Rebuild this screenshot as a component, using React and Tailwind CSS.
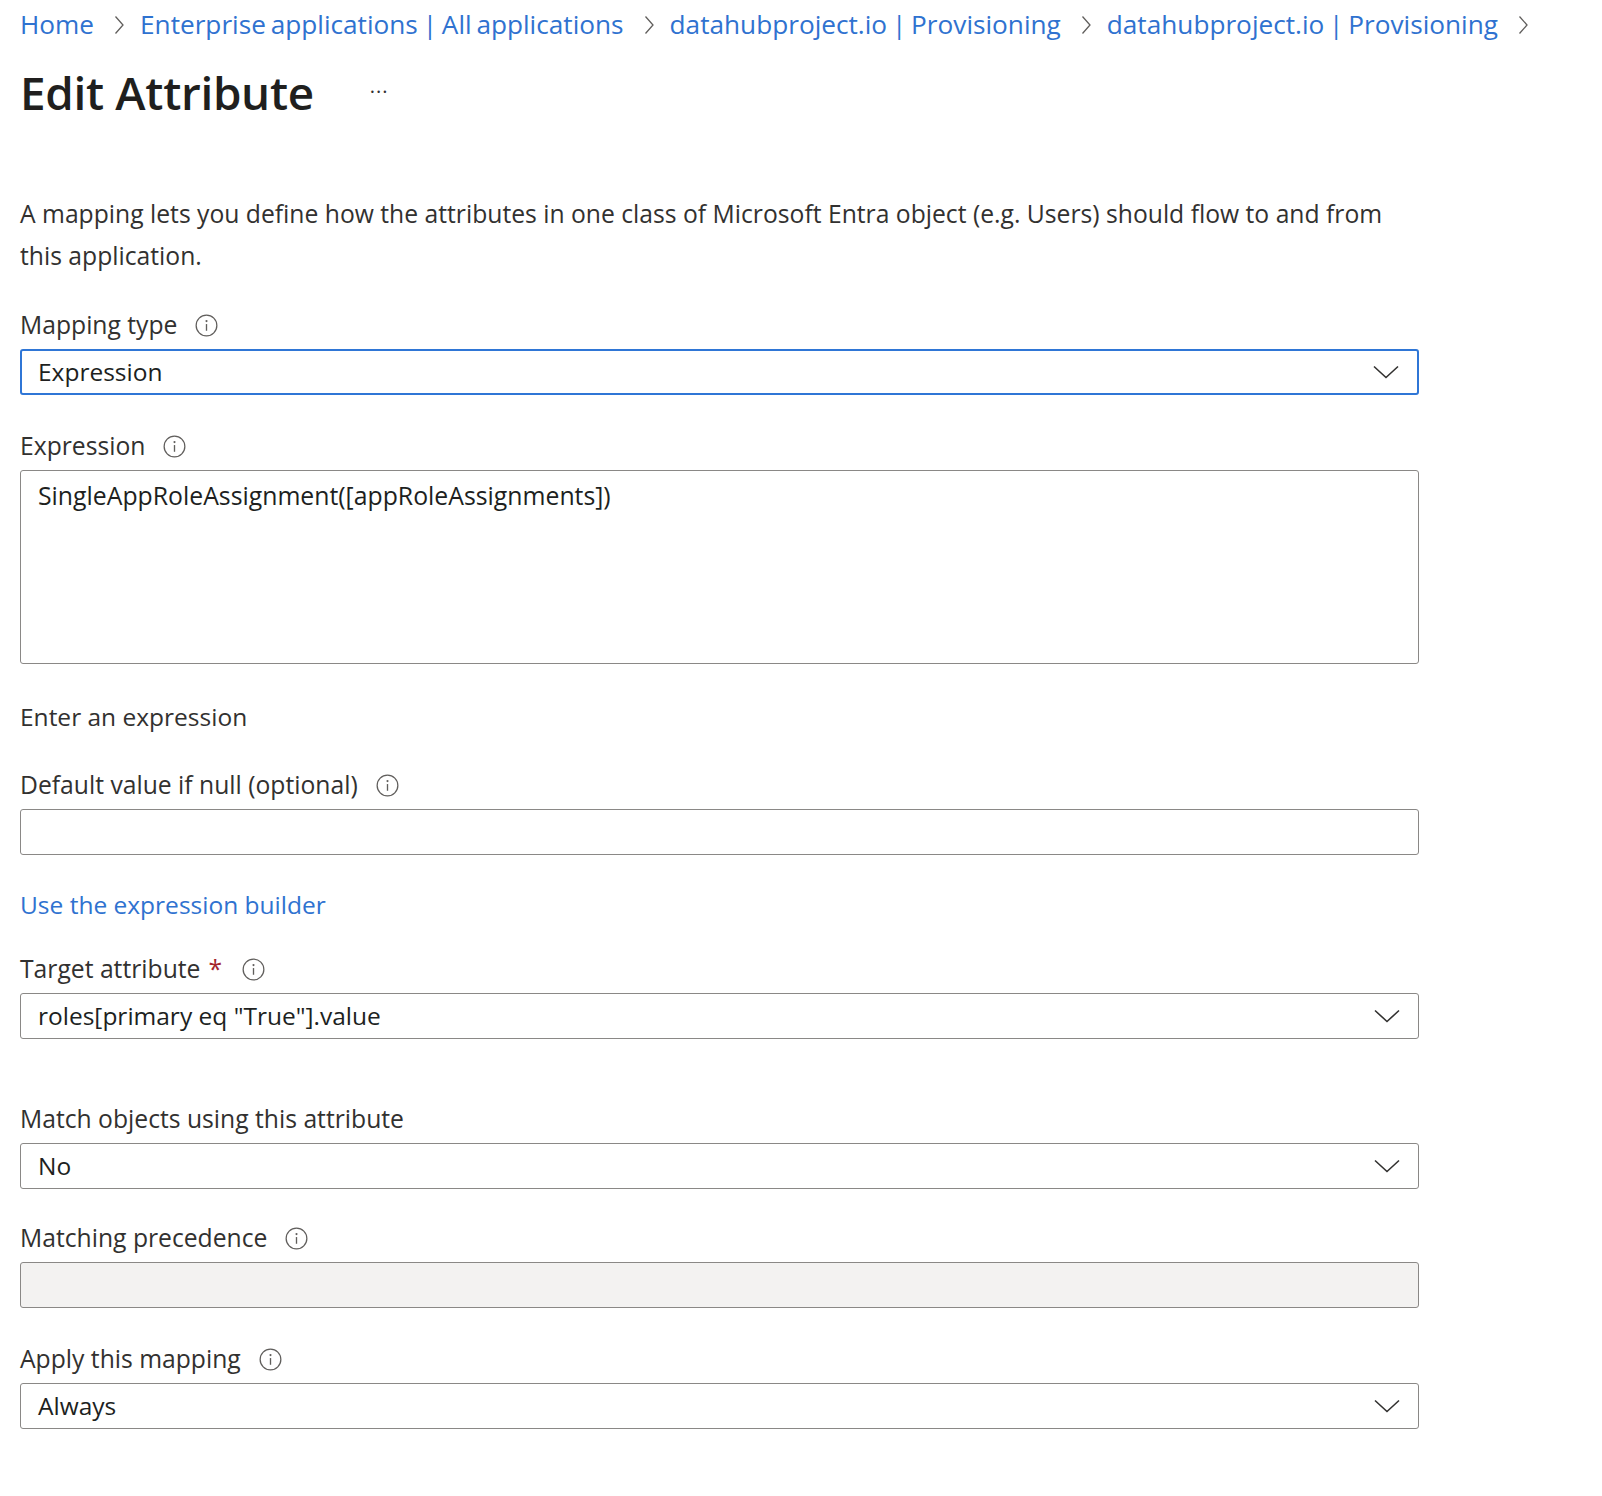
import React from 'react';

const FONT = { fontFamily: '"Open Sans", "Noto Sans", "Liberation Sans", sans-serif' };

function Chevron() {
  return (
    <svg width="26" height="14" viewBox="0 0 26 14" fill="none" className="shrink-0">
      <path d="M1 1.5 L13 12.5 L25 1.5" stroke="#323130" strokeWidth="1.6" strokeLinejoin="miter" />
    </svg>
  );
}

function Sep() {
  return (
    <svg width="12" height="20" viewBox="0 0 12 20" fill="none" className="ml-[19px] mr-[15px] shrink-0">
      <path d="M2.5 1.5 L10 10 L2.5 18.5" stroke="#605e5c" strokeWidth="1.3" />
    </svg>
  );
}

function Info() {
  return (
    <svg width="23" height="23" viewBox="0 0 24 24" fill="none" className="shrink-0">
      <circle cx="12" cy="12" r="10.8" stroke="#605e5c" strokeWidth="1.3" />
      <circle cx="12" cy="7.4" r="1.1" fill="#605e5c" />
      <path d="M12 10.5 V17.5" stroke="#605e5c" strokeWidth="1.4" />
    </svg>
  );
}

function Label({ children, info, required, className = '' }) {
  return (
    <div className={`h-[36px] flex items-center text-[24.7px] text-[#323130] ${className}`}>
      <span>{children}</span>
      {required && <span className="ml-[8px] text-[#a4262c]">*</span>}
      {info && <span className={required ? 'ml-[20px]' : 'ml-[18px]'}><Info /></span>}
    </div>
  );
}

function SelectBox({ value, focused }) {
  return (
    <div className={`mt-[6px] h-[46px] flex items-center justify-between pl-[17px] pr-[18px] rounded-[3px] bg-white text-[24.5px] text-[#201f1e] ${focused ? 'border-2 border-[#2f76d6]' : 'border border-[#8a8886]'}`}>
      <span className={focused ? '-ml-px' : ''}>{value}</span>
      <Chevron />
    </div>
  );
}

const crumbs = [
  'Home',
  'Enterprise applications | All applications',
  'datahubproject.io | Provisioning',
  'datahubproject.io | Provisioning',
];

export default function App() {
  return (
    <div className="min-h-[1496px] bg-white px-[20px]" style={FONT}>
      {/* Breadcrumb */}
      <nav className="pt-[8px] h-[41px] flex items-center text-[26.2px] leading-[33px] text-[#2f72d0] whitespace-nowrap">
        {crumbs.map((c, i) => (
          <React.Fragment key={i}>
            <span className="[word-spacing:-2px]">{c}</span>
            <Sep />
          </React.Fragment>
        ))}
      </nav>

      {/* Title */}
      <div className="mt-[23px] h-[56px] flex items-center">
        <h1 className="text-[45.8px] font-semibold text-[#201f1e] tracking-[-0.3px]">Edit Attribute</h1>
        <span className="ml-[56px] text-[20px] text-[#323130] tracking-[1px]">···</span>
      </div>

      <div className="w-[1399px]">
        <p className="mt-[73px] text-[24.7px] leading-[42px] text-[#323130]">
          A mapping lets you define how the attributes in one class of Microsoft Entra object (e.g. Users) should flow to and from this application.
        </p>

        <Label info className="mt-[30px]">Mapping type</Label>
        <SelectBox value="Expression" focused />

        <Label info className="mt-[33px]">Expression</Label>
        <div className="mt-[6px] h-[194px] border border-[#8a8886] rounded-[3px] pl-[17px] pt-[9px] text-[24.8px] leading-[30px] text-[#201f1e]">
          SingleAppRoleAssignment([appRoleAssignments])
        </div>

        <div className="mt-[35px] h-[36px] flex items-center text-[24.5px] text-[#323130]">Enter an expression</div>

        <Label info className="mt-[32px]">Default value if null (optional)</Label>
        <div className="mt-[6px] h-[46px] border border-[#8a8886] rounded-[3px] bg-white" />

        <div className="mt-[32px] h-[36px] flex items-center text-[24.5px] text-[#2f72d0]">Use the expression builder</div>

        <Label info required className="mt-[28px]">Target attribute</Label>
        <SelectBox value={'roles[primary eq "True"].value'} />

        <Label className="mt-[62px]">Match objects using this attribute</Label>
        <SelectBox value="No" />

        <Label info className="mt-[31px]">Matching precedence</Label>
        <div className="mt-[6px] h-[46px] border border-[#8a8886] rounded-[3px] bg-[#f3f2f1]" />

        <Label info className="mt-[33px]">Apply this mapping</Label>
        <SelectBox value="Always" />
      </div>
    </div>
  );
}
